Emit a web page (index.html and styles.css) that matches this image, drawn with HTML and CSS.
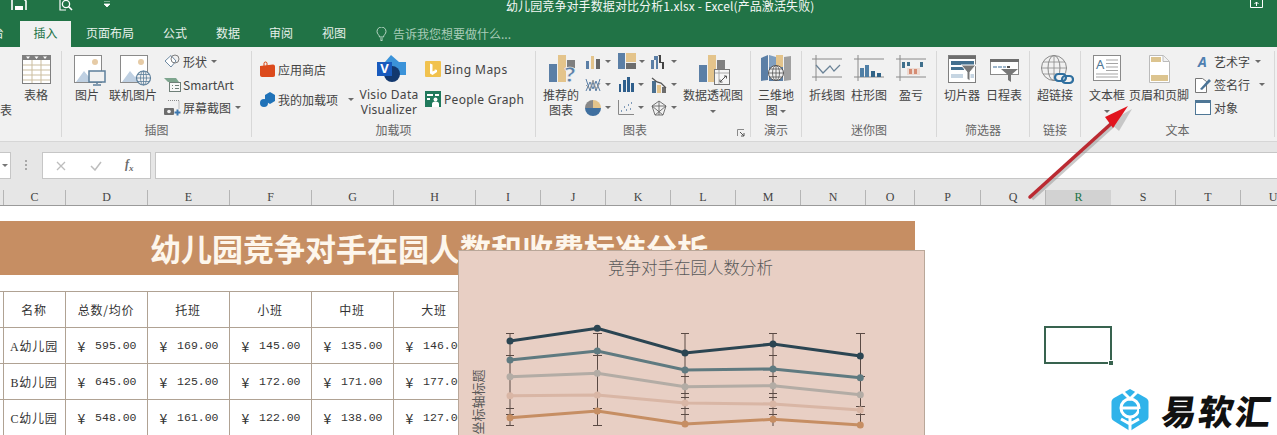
FILE: index.html
```html
<!DOCTYPE html>
<html lang="zh-CN">
<head>
<meta charset="utf-8">
<title>幼儿园竞争对手数据对比分析1.xlsx - Excel</title>
<link rel="stylesheet" href="styles.css">
</head>
<body>
<div class="app">
  <header class="titlebar">
    <div class="qat">
      <svg class="qat-save" width="16" height="10" viewBox="0 3 16 10"><path d="M1 1h11l3 3v11H1z" fill="none" stroke="#fff" stroke-width="1.6"/><rect x="4" y="9" width="8" height="4" fill="#fff"/></svg>
      <svg class="qat-print" width="16" height="11" viewBox="0 4 16 11"><path d="M2 1v13h6" fill="none" stroke="#fff" stroke-width="1.2"/><circle cx="8" cy="8" r="3.6" fill="none" stroke="#fff" stroke-width="1.3"/><path d="M10.5 10.5L14 14" stroke="#fff" stroke-width="1.6"/></svg>
      <svg class="qat-more" width="8" height="7" viewBox="0 0 8 7"><path d="M1 0h6M1 3h6l-3 3z" fill="#fff" stroke="#fff" stroke-width=".8"/></svg>
    </div>
    <div class="doc-title">幼儿园竞争对手数据对比分析1.xlsx - Excel(产品激活失败)</div>
    <svg class="ribbon-opt" width="13" height="8" viewBox="0 0 13 8"><path d="M.5 0v7.500h12V0M6.500 6V2M4.500 4l2-2 2 2" fill="none" stroke="#fff"/></svg>
  </header>

  <nav class="tabs">
    <span class="tab tab-cut">台</span>
    <span class="tab tab-active">插入</span>
    <span class="tab tab-layout">页面布局</span>
    <span class="tab tab-formula">公式</span>
    <span class="tab tab-data">数据</span>
    <span class="tab tab-review">审阅</span>
    <span class="tab tab-view">视图</span>
    <span class="tell">
      <svg width="11" height="14" viewBox="0 0 11 14"><path d="M3.500 10c0-2-2.500-3-2.500-5.500a4.500 4.500 0 0 1 9 0C10 7 7.500 8 7.500 10zM4 12h3M4.500 13.500h2" fill="none" stroke="#b9d6c5"/></svg>
      告诉我您想要做什么...
    </span>
  </nav>

  <section class="ribbon">
    <div class="group g1">
      <div class="body">
        <div class="big w14 cut"><div class="icon"></div><div class="lbl">&nbsp;<br>表</div></div>
        <div class="big w44">
          <div class="icon"><svg width="29" height="29" viewBox="0 0 29 29"><rect x=".5" y=".5" width="28" height="28" fill="#fff" stroke="#7f7f7f"/><rect x="0" y="0" width="29" height="5" fill="#7f7f7f"/><path d="M4 1.500h4l-2 2.500zM12.500 1.500h4l-2 2.500zM21 1.500h4l-2 2.500z" fill="#fff"/><path d="M1 10h27M1 15h27M1 20h27M1 25h27M10 5v23M19 5v23" stroke="#cbbd9f" fill="none"/></svg></div>
          <div class="lbl">表格</div>
        </div>
      </div>
      <div class="gname">&nbsp;</div>
    </div>

    <div class="group g2">
      <div class="body">
        <div class="big w50">
          <div class="icon"><svg class="r3" width="32" height="31" viewBox="0 0 32 31"><rect x=".5" y=".5" width="27" height="27" fill="#fff" stroke="#8a8a8a"/><path d="M2 27l8-11 5 6 3-3 5 8z" fill="#bfd0e2"/><circle cx="21" cy="7" r="3" fill="#e6cba6"/><rect x="15" y="16" width="16" height="11" fill="#f1f1f1" stroke="#5d7f9b" stroke-width="1.500"/><path d="M23 27v2M19 30h8" stroke="#5d7f9b" stroke-width="1.500"/></svg></div>
          <div class="lbl">图片</div>
        </div>
        <div class="big w42">
          <div class="icon"><svg class="r3" width="32" height="31" viewBox="0 0 32 31"><rect x=".5" y=".5" width="27" height="27" fill="#fff" stroke="#8a8a8a"/><path d="M2 27l8-11 5 6 3-3 5 8z" fill="#bfd0e2"/><circle cx="21" cy="7" r="3" fill="#e6cba6"/><circle cx="23.500" cy="23" r="7" fill="#f1f1f1" stroke="#5d7f9b" stroke-width="1.200"/><path d="M16.500 23h14M23.500 16v14M18 19.500h11M18 26.500h11" stroke="#5d7f9b" stroke-width=".8"/><ellipse cx="23.500" cy="23" rx="3" ry="7" fill="none" stroke="#5d7f9b" stroke-width=".8"/></svg></div>
          <div class="lbl">联机图片</div>
        </div>
        <div class="col rows3 ml10">
          <div class="row"><svg class="si" width="17" height="15" viewBox="0 0 17 15"><path d="M1 7l6-5.500L12 7l-5 6z" fill="#fff" stroke="#6f8aa3"/><circle cx="11" cy="5" r="4" fill="none" stroke="#7f7f7f"/></svg><span>形状</span><i class="caret c6"></i></div>
          <div class="row"><svg class="si" width="17" height="15" viewBox="0 0 17 15"><path d="M0 1h12l3 4H4z" fill="#7ea58e"/><rect x="5.500" y="5.500" width="11" height="9" fill="#f7f7f7" stroke="#6f7f78"/><path d="M8 8.500h1M11 8.500h4M8 11.500h1M11 11.500h4" stroke="#6f7f78"/></svg><span>SmartArt</span></div>
          <div class="row"><svg class="si" width="17" height="16" viewBox="0 0 17 16"><path d="M4 .5h11v8" fill="none" stroke="#8a8a8a" stroke-dasharray="1 1"/><rect x="0" y="8" width="10" height="7" rx="1" fill="#6d6d6d"/><circle cx="5" cy="11.500" r="1.800" fill="#f1f1f1"/><path d="M13.500 9.500v6M10.500 12.500h6" stroke="#3d78b0" stroke-width="2"/></svg><span>屏幕截图</span><i class="caret c6"></i></div>
        </div>
      </div>
      <div class="gname">插图</div>
    </div>

    <div class="group g3">
      <div class="body">
        <div class="col rows2 w100 ml8">
          <div class="row"><svg class="si15" width="15" height="16" viewBox="0 0 15 16"><path d="M4 5V2.500a1.500 1.500 0 0 1 3 0V5" fill="none" stroke="#d83b01"/><path d="M0 5l13-1.500c1.500 0 2 1 2 2V14c0 1-.5 2-2 2H2c-1 0-2-1-2-2z" fill="#dc4a1c"/></svg><span>应用商店</span></div>
          <div class="row"><svg class="si15" width="15" height="15" viewBox="0 0 15 15"><path d="M5 3l5-3 5 3v6l-5 3-5-3z" fill="#1f72b8"/><circle cx="4" cy="11" r="4" fill="#1f72b8"/></svg><span>我的加载项</span><i class="caret c13"></i></div>
        </div>
        <div class="big w58">
          <div class="icon"><svg class="r2" width="29" height="27" viewBox="0 0 29 27"><path d="M14 0l8 7h7v13H8V7z" fill="#3b93d9"/><circle cx="15" cy="19" r="8" fill="#12386f"/><rect x="0" y="7" width="15" height="14" fill="#185abd"/><text class="visio-v" x="7.500" y="18">V</text></svg></div>
          <div class="lbl latin">Visio Data<br>Visualizer</div>
        </div>
        <div class="col rows2 ml7">
          <div class="row"><svg class="si16" width="16" height="16" viewBox="0 0 16 16"><rect width="16" height="16" rx="1" fill="#f1c24e"/><path d="M5 2.500l2.500 1v7l3-1.500-1.500-1 3 1v2L7.500 14 5 12.500z" fill="#fff"/></svg><span class="latin">Bing Maps</span></div>
          <div class="row"><svg class="si16" width="16" height="16" viewBox="0 0 16 16"><rect width="16" height="16" fill="#20795c"/><path d="M2 3h6v2H2zM10 3h4v2h-4zM2 7h3v2H2z" fill="#fff"/><circle cx="10.500" cy="8.500" r="2" fill="#fff"/><path d="M7 16v-3c0-1.500 1-2.500 3.500-2.500S14 11.500 14 13v3z" fill="#fff"/></svg><span class="latin pg">People Graph</span></div>
        </div>
      </div>
      <div class="gname">加载项</div>
    </div>

    <div class="group g4">
      <div class="body">
        <div class="big w50">
          <div class="icon"><svg class="r2" width="28" height="30" viewBox="0 0 28 30"><rect x="0" y="9" width="8" height="18" fill="#5b7fa6"/><rect x="9" y="0" width="8" height="27" fill="#e4c48b"/><rect x="18" y="5" width="8" height="8" fill="#7f7f7f"/><text class="q-mark" x="21" y="27">?</text></svg></div>
          <div class="lbl">推荐的<br>图表</div>
        </div>
        <div class="chartgrid">
          <div class="ci"><svg width="16" height="16" viewBox="0 0 16 16"><path d="M1 7h3v8H1z" fill="#5b7fa6"/><path d="M6 2h3v13H6z" fill="#e4c48b"/><path d="M11 5h4v10h-4z" fill="#666"/></svg><i class="caret"></i></div>
          <div class="ci"><svg width="18" height="17" viewBox="0 0 18 17"><path d="M0 0h7v16H0z" fill="#5b7fa6"/><path d="M8 0h10v9H8z" fill="#e4c48b"/><path d="M8 10h10v6H8z" fill="#6d6d6d"/></svg><i class="caret"></i></div>
          <div class="ci"><svg width="16" height="15" viewBox="0 0 16 15"><path d="M0 15V6h3V2h4v13H5V6H3v9z" fill="#5b7fa6"/><path d="M7 1h3v7h3v7h-2V9H8V2z" fill="#444"/></svg><i class="caret"></i></div>
          <div class="ci"><svg width="16" height="16" viewBox="0 0 16 16"><path d="M1 2l4 12 3-9 3 9 4-12M1 14l4-9 3 7 3-8 4 10" fill="none" stroke="#5b7fa6"/><path d="M1 8l4 4 3-9 3 9 4-6" fill="none" stroke="#999"/></svg><i class="caret"></i></div>
          <div class="ci"><svg width="16" height="15" viewBox="0 0 16 15"><path d="M1 7h2v8H1zM5 3h3v12H5zM9 0h3v15H9zM13 6h3v9h-3z" fill="#2f5f8c"/></svg><i class="caret"></i></div>
          <div class="ci"><svg width="16" height="16" viewBox="0 0 16 16"><path d="M1 4h4v12H1z" fill="#4a6f8f"/><path d="M6 8h4v8H6z" fill="#e4c48b"/><path d="M11 10h4v6h-4z" fill="#6d6d6d"/><path d="M1 1l5 4 4 1 5 5" fill="none" stroke="#555" stroke-width="1.300"/></svg><i class="caret"></i></div>
          <div class="ci"><svg width="16" height="16" viewBox="0 0 16 16"><path d="M8 8V0a8 8 0 0 1 8 8z" fill="#e4c48b"/><path d="M8 8H0a8 8 0 0 1 8-8z" fill="#888"/><path d="M8 8h8A8 8 0 0 1 0 8z" fill="#3f6f9f"/></svg><i class="caret"></i></div>
          <div class="ci"><svg width="16" height="15" viewBox="0 0 16 15"><path d="M.5 0v14.500H16" fill="none" stroke="#888"/><path d="M3 11h1M6 7h1M8 10h1M10 5h1M12 9h1M13 3h1" stroke="#5b7fa6" stroke-width="1.400"/></svg><i class="caret"></i></div>
          <div class="ci"><svg width="16" height="16" viewBox="0 0 16 16"><path d="M8 1l7 5-3 9H4L1 6zM8 1v14M1 6l11 9M15 6L4 15M1 6h14" fill="none" stroke="#666" stroke-width=".9"/></svg><i class="caret"></i></div>
        </div>
        <div class="big w60">
          <div class="icon"><svg class="r2" width="32" height="30" viewBox="0 0 32 30"><rect x="0" y="10" width="8" height="17" fill="#5b7fa6"/><rect x="9" y="0" width="8" height="27" fill="#e4c48b"/><rect x="18" y="5" width="8" height="9" fill="#7f7f7f"/><rect x="15.500" y="14.500" width="15" height="15" fill="#f5f5f5" stroke="#777"/><path d="M16 18h14M20 15v14" stroke="#aaa"/><path d="M21 27l6-6M25 21h2.500v2.500M21 24.500V27h2.500" fill="none" stroke="#555"/></svg></div>
          <div class="lbl">数据透视图<br><i class="caret"></i></div>
        </div>
      </div>
      <div class="gname">图表</div>
      <svg class="launcher" width="8" height="8" viewBox="0 0 8 8"><path d="M.5 7V.5H7" fill="none" stroke="#8a8a8a"/><path d="M3 3l4 4M7 4v3H4" fill="none" stroke="#555"/></svg>
    </div>

    <div class="group g5">
      <div class="body">
        <div class="big w50">
          <div class="icon"><svg width="30" height="28" viewBox="0 0 30 28"><path d="M0 3l7-3v25l-7 1z" fill="#5b7fa6"/><path d="M8 0l7 2v12H8z" fill="#7f9fc0"/><path d="M15 0h7v12h-7z" fill="#e4c48b"/><path d="M23 2l7-1v24l-7 1z" fill="#a0a0a0"/><path d="M8 12h14v14H8z" fill="#5b7fa6"/><circle cx="15" cy="18" r="7.500" fill="#f1f1f1" stroke="#555"/><path d="M7.500 18h15M15 10.500v15M9 14h12M9 22h12" stroke="#555" stroke-width=".8"/><ellipse cx="15" cy="18" rx="3.500" ry="7.500" fill="none" stroke="#555" stroke-width=".8"/></svg></div>
          <div class="lbl">三维地<br>图 <i class="caret"></i></div>
        </div>
      </div>
      <div class="gname">演示</div>
    </div>

    <div class="group g6">
      <div class="body">
        <div class="big w42">
          <div class="icon"><svg width="30" height="27" viewBox="0 0 30 27"><path d="M4 0v26M0 4h30M0 22h30" stroke="#8a8a8a" fill="none"/><path d="M4 10l7 8 7-7 4 5 6-6" fill="none" stroke="#6a8296" stroke-width="1.200"/></svg></div>
          <div class="lbl">折线图</div>
        </div>
        <div class="big w42">
          <div class="icon"><svg width="30" height="27" viewBox="0 0 30 27"><path d="M4 0v26M0 4h30M0 22h30" stroke="#8a8a8a" fill="none"/><path d="M6 13h4v9H6zM11 10h4v12h-4z" fill="#4f7fa6"/><path d="M17 16h4v6h-4zM23 18h4v4h-4z" fill="#2f6286"/></svg></div>
          <div class="lbl">柱形图</div>
        </div>
        <div class="big w42">
          <div class="icon"><svg width="30" height="27" viewBox="0 0 30 27"><path d="M4 0v26M0 4h30M0 22h30" stroke="#8a8a8a" fill="none"/><path d="M6 7h3v6H6zM11 7h3v4h-3zM24 7h3v5h-3z" fill="#3f6f8c"/><path d="M13 14h3v5h-3zM18 14h3v5h-3z" fill="#c96f52"/><path d="M11 13h13v7H11z" fill="#e8b8a4" opacity=".4"/></svg></div>
          <div class="lbl">盈亏</div>
        </div>
      </div>
      <div class="gname">迷你图</div>
    </div>

    <div class="group g7">
      <div class="body">
        <div class="big w42">
          <div class="icon"><svg width="29" height="28" viewBox="0 0 29 28"><rect x=".5" y=".5" width="27" height="27" fill="#fff" stroke="#7f7f7f"/><rect x="1" y="1" width="27" height="3" fill="#6d6d6d"/><path d="M3 6h23v4H3z" fill="#44708f"/><path d="M3 12h13v3H3z" fill="#44708f"/><path d="M3 19h12v4H3zM20 19h6v4h-6z" fill="#c6d5e2"/><path d="M13 10h15l-6 7v9l-3-2v-7z" fill="#777" stroke="#fff"/></svg></div>
          <div class="lbl">切片器</div>
        </div>
        <div class="big w42">
          <div class="icon"><svg width="29" height="27" viewBox="0 0 29 27"><rect x=".5" y="4.500" width="28" height="15" fill="#fff" stroke="#8a8a8a"/><rect x="0" y="4" width="29" height="3" fill="#6d6d6d"/><path d="M3 11h4v2H3zM8 11h4v2H8zM13 11h3v2h-3z" fill="#9db6cc"/><path d="M17 11h3v2h-3z" fill="#555"/><path d="M11 14h17l-7 6v7l-3-2v-5z" fill="#777"/></svg></div>
          <div class="lbl">日程表</div>
        </div>
      </div>
      <div class="gname">筛选器</div>
    </div>

    <div class="group g8">
      <div class="body">
        <div class="big w50">
          <div class="icon"><svg class="r2" width="33" height="30" viewBox="0 0 33 30"><circle cx="13" cy="13" r="12.500" fill="none" stroke="#8a8a8a"/><ellipse cx="13" cy="13" rx="6" ry="12.500" fill="none" stroke="#8a8a8a"/><path d="M0 13h26M13 0v26M2 7h22M2 19h22" stroke="#8a8a8a" stroke-width=".8"/><rect x="14" y="19" width="11" height="7" rx="3.500" fill="#f1f1f1" stroke="#2f6f9f" stroke-width="2.200"/><rect x="21" y="21" width="11" height="7" rx="3.500" fill="none" stroke="#2f6f9f" stroke-width="2.200"/></svg></div>
          <div class="lbl">超链接</div>
        </div>
      </div>
      <div class="gname">链接</div>
    </div>

    <div class="group g9">
      <div class="body">
        <div class="big w42">
          <div class="icon"><svg width="28" height="26" viewBox="0 0 28 26"><rect x=".5" y=".5" width="27" height="25" fill="#fff" stroke="#8a8a8a"/><text class="tb-a" x="3" y="14">A</text><path d="M13 5h12M13 8.500h12M13 12h12M13 15.500h12M3 19h22M3 22h22" stroke="#a5a5a5"/></svg></div>
          <div class="lbl">文本框<br><i class="caret"></i></div>
        </div>
        <div class="big w60 ml1">
          <div class="icon"><svg width="21" height="28" viewBox="0 0 21 28"><path d="M.5.500h14l6 6v21H.5z" fill="#fff" stroke="#bbb"/><path d="M14 .5v6h6" fill="#f1f1f1" stroke="#bbb"/><path d="M2 2h10v5H2zM2 20h17v6H2z" fill="#dcc48f"/></svg></div>
          <div class="lbl">页眉和页脚</div>
        </div>
        <div class="col rows3 ml6">
          <div class="row row-t"><svg width="14" height="14" viewBox="0 0 14 14"><text class="art-a" x="1" y="12">A</text></svg><span>艺术字</span><i class="caret c5"></i></div>
          <div class="row row-t"><svg width="17" height="17" viewBox="0 0 17 17"><path d="M.5 2.500h7l4 3v11H.5z" fill="#fff" stroke="#777"/><path d="M5 13l9-10 2 2-9 9z" fill="#4a7396"/></svg><span>签名行</span><i class="caret c11"></i></div>
          <div class="row row-t"><svg width="16" height="15" viewBox="0 0 16 15"><rect x=".5" y=".5" width="15" height="14" fill="#fff" stroke="#4f7796"/><rect x="0" y="0" width="16" height="3" fill="#4f7796"/></svg><span>对象</span></div>
        </div>
      </div>
      <div class="gname">文本</div>
    </div>
  </section>

  <section class="formulabar">
    <div class="namebox"><i class="caret dark"></i></div>
    <div class="dots"></div>
    <div class="fx-box">
      <svg width="10" height="10" viewBox="0 0 10 10"><path d="M1 1l8 8M9 1l-8 8" stroke="#bdbdbd" stroke-width="1.300"/></svg>
      <svg width="12" height="10" viewBox="0 0 12 10"><path d="M1 5l4 4 6-8" fill="none" stroke="#bdbdbd" stroke-width="1.500"/></svg>
      <em>f<sub>x</sub></em>
    </div>
    <div class="fx-input"></div>
  </section>

  <div class="colheads">
    <span></span><span>C</span><span>D</span><span>E</span><span>F</span><span>G</span><span>H</span><span>I</span><span>J</span><span>K</span><span>L</span><span>M</span><span>N</span><span>O</span><span>P</span><span>Q</span><span class="sel">R</span><span>S</span><span>T</span><span>U</span>
  </div>

  <main class="sheet">
    <div class="banner"><span>幼儿园竞争对手在园人数和收费标准分析</span></div>
    <table class="data">
      <colgroup><col class="c-b"><col class="c-c"><col class="c-n"><col class="c-n"><col class="c-n"><col class="c-n"><col class="c-n"><col class="c-r"></colgroup>
      <tr><td></td><td class="wide">名称</td><td class="wide">总数/均价</td><td class="wide">托班</td><td class="wide">小班</td><td class="wide">中班</td><td class="wide">大班</td><td></td></tr>
      <tr><td></td><td class="wide"><span class="l">A</span>幼儿园</td><td><div class="m"><b>¥</b><b>595.00</b></div></td><td><div class="m"><b>¥</b><b>169.00</b></div></td><td><div class="m"><b>¥</b><b>145.00</b></div></td><td><div class="m"><b>¥</b><b>135.00</b></div></td><td><div class="m"><b>¥</b><b>146.00</b></div></td><td></td></tr>
      <tr><td></td><td class="wide"><span class="l">B</span>幼儿园</td><td><div class="m"><b>¥</b><b>645.00</b></div></td><td><div class="m"><b>¥</b><b>125.00</b></div></td><td><div class="m"><b>¥</b><b>172.00</b></div></td><td><div class="m"><b>¥</b><b>171.00</b></div></td><td><div class="m"><b>¥</b><b>177.00</b></div></td><td></td></tr>
      <tr><td></td><td class="wide"><span class="l">C</span>幼儿园</td><td><div class="m"><b>¥</b><b>548.00</b></div></td><td><div class="m"><b>¥</b><b>161.00</b></div></td><td><div class="m"><b>¥</b><b>122.00</b></div></td><td><div class="m"><b>¥</b><b>138.00</b></div></td><td><div class="m"><b>¥</b><b>127.00</b></div></td><td></td></tr>
    </table>

    <div class="selcell"><i></i></div>

    <figure class="chart">
      <figcaption>竞争对手在园人数分析</figcaption>
      <div class="ytitle">坐标轴标题</div>
      <svg class="plot" width="466" height="185" viewBox="459 251 466 185">
        <g fill="none" stroke="#5a4a44">
          <path d="M510 333v93M597.500 333v93M685 333v93M773 333v93M860.500 333v93"/>
          <path d="M506 333.500h8M506 355.500h8M506 408.500h8M506 414.500h8M506 425.500h8M593 333.500h9M593 355.500h9M593 408.500h9M593 425.500h9M681 333.500h8M681 376.500h8M681 393.500h8M681 397.500h8M681 408.500h8M681 414.500h8M769 333.500h8M769 355.500h8M769 376.500h8M769 393.500h8M769 397.500h8M769 408.500h8M769 414.500h8M856 333.500h9M856 376.500h9M856 406.500h9M856 414.500h9"/>
        </g>
        <g class="s5"><polyline points="510,417.700 597.300,411 685,424 773,419.300 860.300,425"/><circle cx="510" cy="417.700" r="3.500"/><circle cx="597.300" cy="411" r="3.500"/><circle cx="685" cy="424" r="3.500"/><circle cx="773" cy="419.300" r="3.500"/><circle cx="860.300" cy="425" r="3.500"/></g>
        <g class="s4"><polyline points="510,395.700 597.300,395 685,403 773,404 860.300,410"/><circle cx="510" cy="395.700" r="3.500"/><circle cx="597.300" cy="395" r="3.500"/><circle cx="685" cy="403" r="3.500"/><circle cx="773" cy="404" r="3.500"/><circle cx="860.300" cy="410" r="3.500"/></g>
        <g class="s3"><polyline points="510,376.700 597.300,373.300 685,386.700 773,385.700 860.300,394.700"/><circle cx="510" cy="376.700" r="3.500"/><circle cx="597.300" cy="373.300" r="3.500"/><circle cx="685" cy="386.700" r="3.500"/><circle cx="773" cy="385.700" r="3.500"/><circle cx="860.300" cy="394.700" r="3.500"/></g>
        <g class="s2"><polyline points="510,360 597.300,351 685,370 773,369 860.300,377.700"/><circle cx="510" cy="360" r="3.500"/><circle cx="597.300" cy="351" r="3.500"/><circle cx="685" cy="370" r="3.500"/><circle cx="773" cy="369" r="3.500"/><circle cx="860.300" cy="377.700" r="3.500"/></g>
        <g class="s1"><polyline points="510,341 597.300,328.300 685,353 773,344 860.300,356"/><circle cx="510" cy="341" r="3.500"/><circle cx="597.300" cy="328.300" r="3.500"/><circle cx="685" cy="353" r="3.500"/><circle cx="773" cy="344" r="3.500"/><circle cx="860.300" cy="356" r="3.500"/></g>
      </svg>
    </figure>
  </main>

  <svg class="arrow" width="130" height="110" viewBox="1020 100 130 110">
    <path d="M1032 199L1114 125" stroke="#8a8a8a" stroke-width="3.500" opacity=".45"/>
    <path d="M1107 120l23-13-13 22z" fill="#8a8a8a" opacity=".4" transform="translate(2 2)"/>
    <path d="M1030 197L1113 122" stroke="#bb2a32" stroke-width="3.500" stroke-linecap="round"/>
    <path d="M1128 106l-23 11 8 11z" fill="#e1141e"/>
  </svg>

  <div class="brand">
    <svg width="38" height="44" viewBox="0 0 38 44"><path d="M19 1l16 9c1.500 1 2.500 2 2.500 4v15c0 2-1 3-2.500 4L19 43 3 33c-1.500-1-2.500-2-2.500-4V14c0-2 1-3 2.500-4z" fill="#2fb3ea"/><path d="M11 3l8 8 8-8" fill="none" stroke="#fff" stroke-width="3"/><circle cx="19" cy="20" r="9" fill="none" stroke="#fff" stroke-width="3"/><path d="M10 20h18" stroke="#fff" stroke-width="3"/><path d="M19 29v15M10 31l9 5 9-5" fill="none" stroke="#fff" stroke-width="3"/><path d="M28 23h6" stroke="#2fb3ea" stroke-width="4"/></svg>
    <span>易软汇</span>
  </div>
</div>
</body>
</html>
```

FILE: styles.css
```css
* { box-sizing: border-box; }
html, body { margin: 0; padding: 0; }
body { width: 1277px; height: 435px; overflow: hidden; background: #fff; font-family: "Noto Sans CJK SC", "Noto Sans", sans-serif; font-size: 12px; color: #444; }
.app { position: relative; width: 1277px; height: 435px; overflow: hidden; }
svg { display: block; flex: none; }

.titlebar { height: 21px; background: #217346; color: #fff; display: flex; align-items: flex-start; position: relative; }
.qat { width: 506px; display: flex; align-items: flex-start; flex: none; }
.qat-save { margin-left: 11px; }
.qat-print { margin-left: 31px; }
.qat-more { margin-left: 29px; margin-top: 1px; }
.doc-title { line-height: 11px; font-size: 12px; letter-spacing: .1px; white-space: nowrap; color: #f2f7f4; }
.ribbon-opt { margin-left: auto; margin-right: 14px; }

.tabs { height: 26px; background: #217346; display: flex; align-items: stretch; color: #e6f0ea; line-height: 24px; position: relative; }
.tab { white-space: nowrap; }
.tab-cut { margin-left: -8px; flex: none; width: 28px; }
.tab-active { width: 51px; background: #f1f1f1; color: #217346; text-align: center; }
.tab-layout { margin-left: 15px; width: 48px; }
.tab-formula { margin-left: 29px; width: 24px; }
.tab-data { margin-left: 29px; width: 24px; }
.tab-review { margin-left: 29px; width: 24px; }
.tab-view { margin-left: 29px; width: 24px; }
.tell { margin-left: 30px; display: flex; align-items: center; gap: 6px; color: #a9ccb8; }

.ribbon { height: 95px; background: #f1f1f1; padding-top: 4px; display: flex; border-bottom: 1px solid #d6d6d6; }
.group { height: 86px; border-right: 1px solid #d8d8d8; flex: none; position: relative; }
.g1 { width: 62px; }
.g2 { width: 190px; }
.g3 { width: 284px; }
.g4 { width: 215px; }
.g5 { width: 51px; }
.g6 { width: 135px; padding-left: 4px; }
.g7 { width: 93px; padding-left: 4px; }
.g8 { width: 51px; }
.g9 { width: 194px; padding-left: 5px; }
.body { height: 70px; padding-top: 2px; display: flex; }
.gname { height: 16px; line-height: 18px; text-align: center; color: #666; }
.g4 .gname { padding-right: 16px; }
.g6 .gname, .g7 .gname { margin-left: -4px; }
.g9 .gname { margin-left: -5px; }

.big { display: flex; flex-direction: column; align-items: center; flex: none; }
.big .icon { height: 34px; padding-top: 2px; display: flex; align-items: flex-start; justify-content: center; }
.r2 { margin-left: 4px; }
.r3 { margin-left: 6px; }
.lbl { line-height: 15px; text-align: center; white-space: nowrap; color: #444; }
.lbl.latin { font-family: "Noto Sans", sans-serif; font-size: 12px; letter-spacing: .3px; }
.w14 { width: 14px; } .w42 { width: 42px; } .w44 { width: 44px; } .w50 { width: 50px; } .w58 { width: 58px; } .w60 { width: 60px; }
.cut { align-items: flex-start; }
.w100 { width: 100px; flex: none; }
.ml1 { margin-left: 1px; } .ml6 { margin-left: 6px; } .ml7 { margin-left: 7px; } .ml8 { margin-left: 8px; } .ml10 { margin-left: 10px; }

.col { display: flex; flex-direction: column; flex: none; }
.rows3 { margin-top: -3px; }
.rows3 .row { height: 23px; }
.rows2 { margin-top: 1px; }
.rows2 .row { height: 30px; }
.row { display: flex; align-items: center; white-space: nowrap; color: #444; }
.row .si { margin-right: 2px; width: 17px; }
.row .si15 { margin-right: 3px; }
.row .si16 { margin-right: 3px; }
.row-t svg { margin-right: 2px; }
.row-t:first-child svg { margin-left: 2px; margin-right: 3px; }
.row-t:last-child svg { margin-right: 3px; }
.latin { font-family: "Noto Sans", sans-serif; letter-spacing: .45px; }
.pg { letter-spacing: .3px; }

.caret { display: inline-block; width: 0; height: 0; border-left: 3px solid transparent; border-right: 3px solid transparent; border-top: 3px solid #6b6b6b; vertical-align: middle; flex: none; }
.caret.dark { border-top-color: #777; }
.c5 { margin-left: 5px; } .c6 { margin-left: 4px; } .c11 { margin-left: 9px; } .c13 { margin-left: 10px; }

.chartgrid { width: 98px; display: grid; grid-template-columns: repeat(3, 33px); grid-auto-rows: 23px; margin-top: -3px; flex: none; margin-left: -1px; }
.ci { display: flex; align-items: center; gap: 3px; }
.ci .caret { margin-left: auto; margin-right: 7px; }

.launcher { position: absolute; right: 5px; bottom: 0; }
.visio-v { font: bold 13px "Noto Sans", sans-serif; fill: #fff; text-anchor: middle; }
.q-mark { font: bold 22px "Noto Sans", sans-serif; fill: #5b7fa6; text-anchor: middle; stroke: #f1f1f1; stroke-width: .6px; }
.tb-a { font: 13px "Noto Sans", sans-serif; fill: #4f7796; }
.art-a { font: italic bold 14px "Noto Sans", sans-serif; fill: #4f7fb0; }

.formulabar { height: 38px; background: #e6e6e6; display: flex; padding-top: 10px; align-items: flex-start; }
.namebox { width: 11px; height: 27px; background: #fff; border: 1px solid #c6c6c6; border-left: 0; display: flex; align-items: center; justify-content: flex-end; padding-right: 2px; }
.dots { width: 2px; height: 10px; margin: 8px 0 0 14px; background: repeating-linear-gradient(to bottom, #a8a8a8 0 2px, transparent 2px 4px); }
.fx-box { width: 109px; height: 27px; margin-left: 15px; background: #fff; border: 1px solid #c6c6c6; display: flex; align-items: center; padding-left: 13px; gap: 24px; }
.fx-box em { font: italic bold 12px "Liberation Serif", serif; color: #6b6b6b; margin-left: -1px; }
.fx-box sub { font-size: 9px; }
.fx-input { flex: 1; height: 27px; margin-left: 4px; background: #fff; border: 1px solid #c6c6c6; border-right: 0; }

.colheads { height: 26px; background: #e6e6e6; border-bottom: 1px solid #9a9a9a; display: grid; grid-template-columns: 4px 62px repeat(5, 82px) 65px 65px 65px 65px 65px 65px 49px 66px 65px 65px 65px 65px 65px; font: 12px "Liberation Serif", serif; color: #444; overflow: hidden; }
.colheads span { height: 15px; margin-top: 10px; line-height: 15px; text-align: center; border-right: 1px solid #b5b5b5; }
.colheads .sel { background: #d2d2d2; color: #217346; border-right: 0; box-shadow: 0 1px 0 #217346; }

.sheet { position: relative; height: 229px; overflow: hidden; background: #fff; padding-top: 15px; }
.banner { width: 915px; height: 54px; background: #c68e63; padding-right: 57px; color: #fdf6ec; font-size: 31px; font-weight: 700; line-height: 54px; text-align: center; white-space: nowrap; }
.data { margin: 16px 0 0 -1px; width: 916px; table-layout: fixed; border-collapse: collapse; color: #333; }
.c-b { width: 4px; } .c-c { width: 62px; } .c-n { width: 82px; } .c-r { width: 440px; }
.data td { height: 36px; padding: 0; border: 1px solid #b0a293; text-align: center; overflow: hidden; white-space: nowrap; font-size: 12px; }
.data tr td:first-child { border-left: 0; }
.wide { letter-spacing: .8px; }
.l { font-family: "Liberation Serif", serif; }
.m { display: flex; justify-content: space-between; align-items: center; padding: 0 10px 0 12px; font-family: "Liberation Mono", monospace; font-size: 11.500px; }
.m b { font-weight: 400; }
.m b:first-child { font-family: "Noto Sans CJK SC", sans-serif; font-size: 14px; line-height: 16px; }

.selcell { position: absolute; left: 1044px; top: 120px; width: 68px; height: 38px; border: 2px solid #38634f; }
.selcell i { position: absolute; right: -4px; bottom: -4px; width: 6px; height: 6px; background: #38634f; border: 1px solid #fff; }

.chart { position: absolute; left: 458px; top: 44px; width: 467px; height: 200px; margin: 0; background: #e8cfc4; border: 1px solid #b9a799; }
.chart figcaption { position: absolute; left: 0; right: 0; top: 4px; padding-right: 2px; text-align: center; font-size: 16.500px; font-weight: 300; line-height: 24px; color: #595959; }
.ytitle { position: absolute; left: -17px; top: 141px; width: 70px; height: 15px; transform: rotate(-90deg); font-size: 13px; line-height: 15px; color: #595959; white-space: nowrap; }
.plot { position: absolute; left: 0; top: 0; }
.plot polyline { fill: none; stroke-width: 3px; }
.s1 polyline { stroke: #2b4552; } .s1 circle { fill: #2b4552; }
.s2 polyline { stroke: #5f7a80; } .s2 circle { fill: #5f7a80; }
.s3 polyline { stroke: #b3aca5; } .s3 circle { fill: #b3aca5; }
.s4 polyline { stroke: #d9b6a5; } .s4 circle { fill: #d9b6a5; }
.s5 polyline { stroke: #c68e63; } .s5 circle { fill: #c68e63; }

.arrow { position: absolute; left: 1020px; top: 100px; }
.brand { position: absolute; left: 1111px; top: 388px; display: flex; align-items: center; gap: 13px; }
.brand span { font-size: 35px; line-height: 44px; font-weight: 900; color: #111; letter-spacing: 2px; white-space: nowrap; transform: skewX(-8deg); }
```
